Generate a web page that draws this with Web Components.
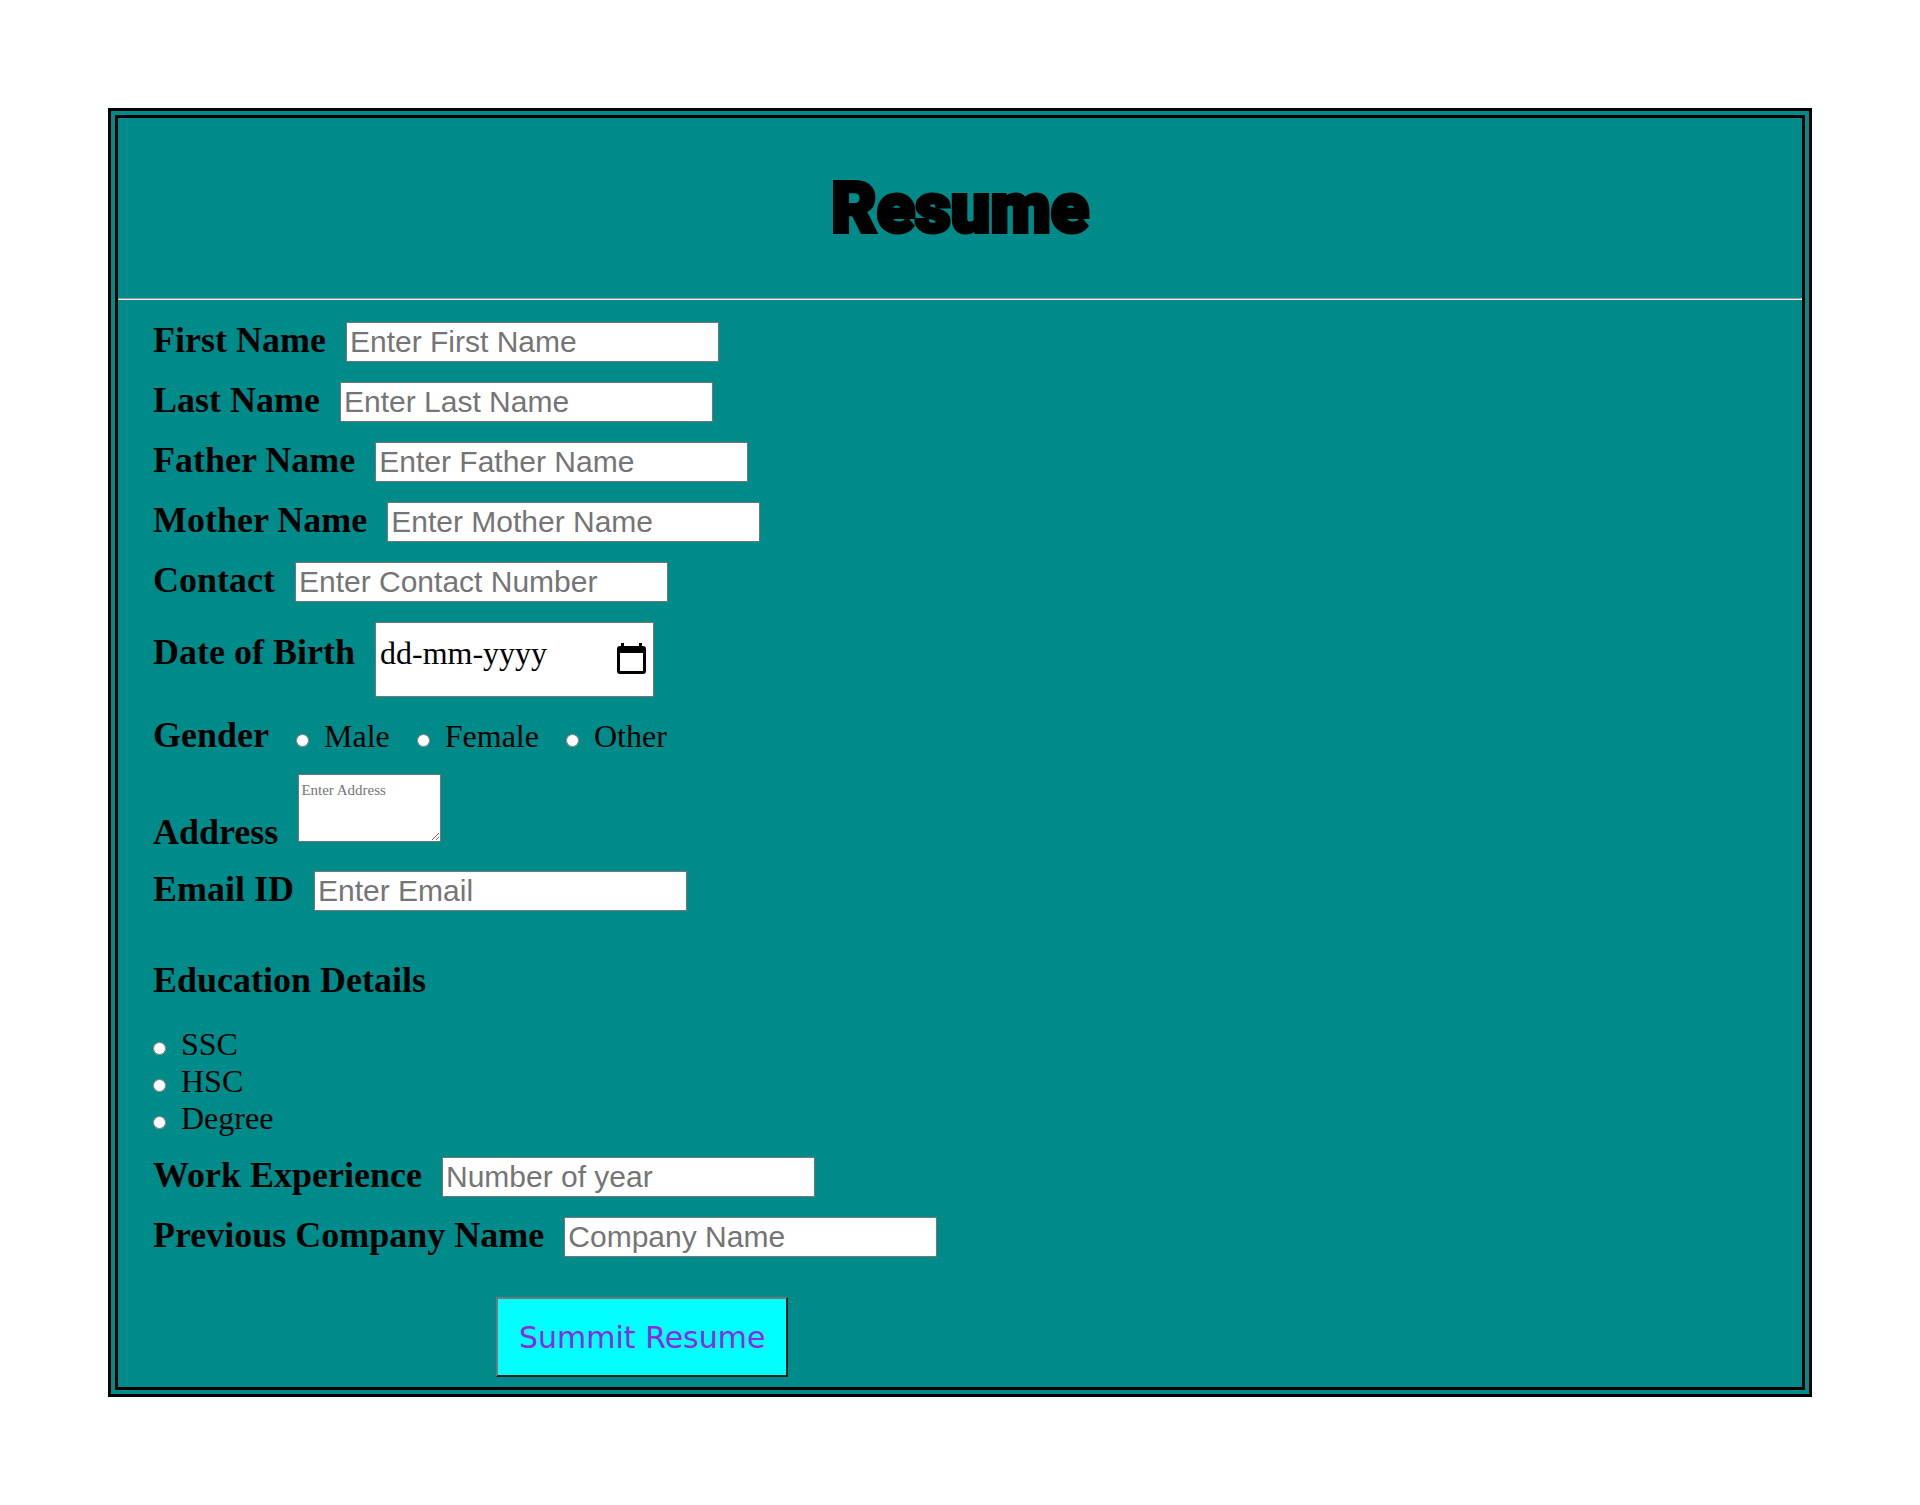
<!DOCTYPE html>
<html lang="en">
<head>
<meta charset="utf-8">
<title>Resume</title>
<style>
body { margin: 108px; background: #fff; color: #000; font-family: "Liberation Serif", serif; font-size: 32px; line-height: 37px; }
</style>
</head>
<body>
<resume-card heading="Resume">
  <text-field label="First Name" placeholder="Enter First Name"></text-field>
  <text-field label="Last Name" placeholder="Enter Last Name"></text-field>
  <text-field label="Father Name" placeholder="Enter Father Name"></text-field>
  <text-field label="Mother Name" placeholder="Enter Mother Name"></text-field>
  <text-field label="Contact" type="tel" placeholder="Enter Contact Number"></text-field>
  <date-field label="Date of Birth" placeholder="dd-mm-yyyy"></date-field>
  <radio-group label="Gender" name="gender" options="Male,Female,Other"></radio-group>
  <area-field label="Address" placeholder="Enter Address"></area-field>
  <text-field label="Email ID" type="email" placeholder="Enter Email"></text-field>
  <radio-group stacked label="Education Details" name="education" options="SSC,HSC,Degree"></radio-group>
  <text-field label="Work Experience" placeholder="Number of year"></text-field>
  <text-field label="Previous Company Name" placeholder="Company Name"></text-field>
  <submit-button>Summit Resume</submit-button>
</resume-card>
<script>
const fieldStyles = `
  *, *::before { box-sizing: border-box; }
  :host { display: flex; align-items: baseline; gap: 20px; }
  .label { font-size: 36px; font-weight: bold; line-height: 37px; white-space: nowrap; }
  input, textarea { margin: 0; border: 1px solid #767676; border-radius: 0; background: #fff; color: #000; }
  ::placeholder { color: #757575; opacity: 1; }
`;

customElements.define('resume-card', class extends HTMLElement {
  connectedCallback() {
    this.attachShadow({ mode: 'open' }).innerHTML = `
      <style>
        :host { display: block; background: #008b8b; border: 10px double #000; }
        header { display: flex; align-items: center; justify-content: center; height: 180px; }
        h1 { margin: 0; font: 900 70px/90px Roboto, "Liberation Sans", sans-serif; -webkit-text-stroke: 4px #000; }
        hr { margin: 0; border: 1px inset #eee; }
        form { display: flex; flex-direction: column; gap: 20px; padding: 22px 35px 10px; }
      </style>
      <header><h1>${this.getAttribute('heading')}</h1></header>
      <hr>
      <form><slot></slot></form>`;
  }
});

customElements.define('text-field', class extends HTMLElement {
  connectedCallback() {
    this.attachShadow({ mode: 'open' }).innerHTML = `
      <style>${fieldStyles}
        :host { height: 40px; }
        input { width: 373px; height: 40px; padding: 1px 3px; font: 30px "Liberation Sans", sans-serif; }
      </style>
      <label class="label" for="field">${this.getAttribute('label')}</label>
      <input id="field" type="${this.getAttribute('type') || 'text'}" placeholder="${this.getAttribute('placeholder')}">`;
  }
});

customElements.define('date-field', class extends HTMLElement {
  connectedCallback() {
    this.attachShadow({ mode: 'open' }).innerHTML = `
      <style>${fieldStyles}
        .box { display: flex; align-items: baseline; width: 279px; height: 75px; padding: 12px 7px 0 4px; border: 1px solid #767676; background: #fff; }
        input { flex: 1; min-width: 0; height: 36px; padding: 0; border: 0; font: 32px/36px "Liberation Serif", serif; }
        ::placeholder { color: #000; }
        button { align-self: flex-start; margin: 8px 0 0; padding: 0; border: 0; background: none; }
        svg { display: block; }
      </style>
      <label class="label" for="field">${this.getAttribute('label')}</label>
      <div class="box">
        <input id="field" type="text" placeholder="${this.getAttribute('placeholder')}">
        <button type="button" aria-label="Open calendar">
          <svg width="29" height="31" viewBox="0 0 29 31"><path fill="#000" fill-rule="evenodd" d="M4 0h3v3h15V0h3v3h1a3 3 0 0 1 3 3v22a3 3 0 0 1-3 3H3a3 3 0 0 1-3-3V6a3 3 0 0 1 3-3h1zM3 10v18h23V10z"/></svg>
        </button>
      </div>`;
  }
});

customElements.define('area-field', class extends HTMLElement {
  connectedCallback() {
    this.attachShadow({ mode: 'open' }).innerHTML = `
      <style>${fieldStyles}
        :host { align-items: flex-end; height: 77px; }
        textarea { width: 143px; height: 68px; margin-bottom: 9px; padding: 7px 2px 2px; font: 15px/17px "Liberation Serif", serif; }
      </style>
      <label class="label" for="field">${this.getAttribute('label')}</label>
      <textarea id="field" placeholder="${this.getAttribute('placeholder')}"></textarea>`;
  }
});

customElements.define('radio-group', class extends HTMLElement {
  connectedCallback() {
    const name = this.getAttribute('name');
    const options = this.getAttribute('options').split(',').map((text, i) => `
      <div class="option"><input type="radio" id="${name}${i}" name="${name}"><label for="${name}${i}">${text}</label></div>`).join('');
    this.attachShadow({ mode: 'open' }).innerHTML = `
      <style>${fieldStyles}
        :host { gap: 27px; }
        :host(:not([stacked])) { height: 37px; }
        .options { display: flex; gap: 27px; }
        .option { display: flex; align-items: baseline; gap: 15px; height: 37px; }
        input { width: 13px; height: 13px; }
        :host([stacked]) { flex-direction: column; padding-top: 31px; }
        :host([stacked]) .options { flex-direction: column; gap: 0; }
      </style>
      <span class="label" id="title">${this.getAttribute('label')}</span>
      <div class="options" role="radiogroup" aria-labelledby="title">${options}</div>`;
  }
});

customElements.define('submit-button', class extends HTMLElement {
  connectedCallback() {
    this.attachShadow({ mode: 'open' }).innerHTML = `
      <style>
        :host { display: block; padding: 20px 0 0 343px; }
        button { display: block; height: 80px; padding: 0 21px; border: 2px solid; border-color: #767676 #212121 #212121 #767676; border-radius: 0; background: #0ff; color: #8a2be2; font: 30px "DejaVu Sans", sans-serif; }
      </style>
      <button type="submit"><slot></slot></button>`;
  }
});
</script>
</body>
</html>
